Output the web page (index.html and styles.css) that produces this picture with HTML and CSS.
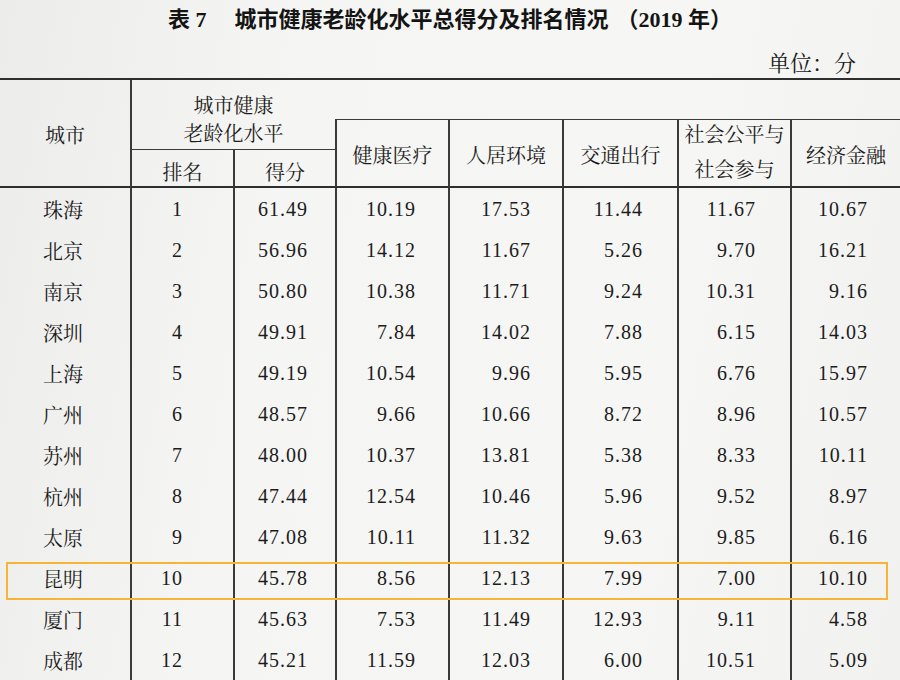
FILE: index.html
```html
<!DOCTYPE html>
<html lang="zh-CN">
<head>
<meta charset="utf-8">
<title>表7 城市健康老龄化水平总得分及排名情况</title>
<link rel="stylesheet" href="styles.css">
</head>
<body>
<div class="page">
  <h1 class="title"><span class="tno">表 7</span>城市健康老龄化水平总得分及排名情况<span class="yr">（2019 年）</span></h1>
  <div class="unit">单位：分</div>
  <div class="table">
    <div class="h-city">城市</div>
    <div class="h-total">城市健康<br>老龄化水平</div>
    <div class="h-blank"></div>
    <div class="h-dim c4">健康医疗</div>
    <div class="h-dim c5">人居环境</div>
    <div class="h-dim c6">交通出行</div>
    <div class="h-dim c7 two">社会公平与<br>社会参与</div>
    <div class="h-dim c8">经济金融</div>
    <div class="h-sub c2">排名</div>
    <div class="h-sub c3">得分</div>

    <div class="d name">珠海</div><div class="d c2">1</div><div class="d c3">61.49</div><div class="d c4">10.19</div><div class="d c5">17.53</div><div class="d c6">11.44</div><div class="d c7">11.67</div><div class="d c8">10.67</div>
    <div class="d name">北京</div><div class="d c2">2</div><div class="d c3">56.96</div><div class="d c4">14.12</div><div class="d c5">11.67</div><div class="d c6">5.26</div><div class="d c7">9.70</div><div class="d c8">16.21</div>
    <div class="d name">南京</div><div class="d c2">3</div><div class="d c3">50.80</div><div class="d c4">10.38</div><div class="d c5">11.71</div><div class="d c6">9.24</div><div class="d c7">10.31</div><div class="d c8">9.16</div>
    <div class="d name">深圳</div><div class="d c2">4</div><div class="d c3">49.91</div><div class="d c4">7.84</div><div class="d c5">14.02</div><div class="d c6">7.88</div><div class="d c7">6.15</div><div class="d c8">14.03</div>
    <div class="d name">上海</div><div class="d c2">5</div><div class="d c3">49.19</div><div class="d c4">10.54</div><div class="d c5">9.96</div><div class="d c6">5.95</div><div class="d c7">6.76</div><div class="d c8">15.97</div>
    <div class="d name">广州</div><div class="d c2">6</div><div class="d c3">48.57</div><div class="d c4">9.66</div><div class="d c5">10.66</div><div class="d c6">8.72</div><div class="d c7">8.96</div><div class="d c8">10.57</div>
    <div class="d name">苏州</div><div class="d c2">7</div><div class="d c3">48.00</div><div class="d c4">10.37</div><div class="d c5">13.81</div><div class="d c6">5.38</div><div class="d c7">8.33</div><div class="d c8">10.11</div>
    <div class="d name">杭州</div><div class="d c2">8</div><div class="d c3">47.44</div><div class="d c4">12.54</div><div class="d c5">10.46</div><div class="d c6">5.96</div><div class="d c7">9.52</div><div class="d c8">8.97</div>
    <div class="d name">太原</div><div class="d c2">9</div><div class="d c3">47.08</div><div class="d c4">10.11</div><div class="d c5">11.32</div><div class="d c6">9.63</div><div class="d c7">9.85</div><div class="d c8">6.16</div>
    <div class="d name">昆明</div><div class="d c2">10</div><div class="d c3">45.78</div><div class="d c4">8.56</div><div class="d c5">12.13</div><div class="d c6">7.99</div><div class="d c7">7.00</div><div class="d c8">10.10</div>
    <div class="d name">厦门</div><div class="d c2">11</div><div class="d c3">45.63</div><div class="d c4">7.53</div><div class="d c5">11.49</div><div class="d c6">12.93</div><div class="d c7">9.11</div><div class="d c8">4.58</div>
    <div class="d name">成都</div><div class="d c2">12</div><div class="d c3">45.21</div><div class="d c4">11.59</div><div class="d c5">12.03</div><div class="d c6">6.00</div><div class="d c7">10.51</div><div class="d c8">5.09</div>

    <div class="highlight"></div>
  </div>
</div>
</body>
</html>
```

FILE: styles.css
```css
html, body {
  margin: 0;
  padding: 0;
  width: 900px;
  height: 680px;
  overflow: hidden;
}

body {
  background: #f3f3f1;
  color: #1c1c1c;
  font-family: "Liberation Serif", "Noto Serif CJK SC", "Noto Sans CJK SC", serif;
}

.page {
  width: 900px;
  height: 680px;
  background: linear-gradient(100deg, #ecedeb 0%, #f5f5f3 30%, #f6f6f4 70%, #f1f1ef 100%);
}

.title {
  margin: 0;
  height: 40px;
  line-height: 40px;
  text-align: center;
  font-family: "Liberation Serif", "Noto Sans CJK SC", sans-serif;
  font-weight: 700;
  font-size: 22px;
  color: #141414;
}

.tno {
  margin-right: 28px;
}

.yr {
  padding-left: 8px;
}

.unit {
  height: 38px;
  line-height: 44px;
  text-align: right;
  padding-right: 44px;
  font-family: "Noto Serif CJK SC", "Noto Sans CJK SC", sans-serif;
  font-size: 22px;
}

.table {
  position: relative;
  display: grid;
  grid-template-columns: 130px 103px 102px 113px 114px 115px 113px 110px;
  grid-template-rows: 40px 30px 38px repeat(12, 41px);
  border-top: 2px solid #2e2e2e;
  font-size: 20px;
}

.table > div {
  box-sizing: border-box;
}

.h-city {
  grid-column: 1;
  grid-row: 1 / 4;
  display: flex;
  align-items: center;
  justify-content: center;
  border-bottom: 2px solid #2e2e2e;
  padding-top: 2px;
}

.h-total {
  grid-column: 2 / 4;
  grid-row: 1 / 3;
  border-left: 2px solid #3a3a3a;
  border-bottom: 1px solid #3a3a3a;
  text-align: center;
  line-height: 28px;
  padding-top: 12px;
}

.h-blank {
  grid-column: 4 / 9;
  grid-row: 1;
  border-bottom: 1px solid #3a3a3a;
}

.h-dim {
  grid-row: 2 / 4;
  border-left: 2px solid #3a3a3a;
  border-bottom: 2px solid #2e2e2e;
  display: flex;
  align-items: center;
  justify-content: center;
  text-align: center;
  padding-top: 2px;
}

.h-dim.two {
  line-height: 35px;
  padding-top: 0;
}

.h-dim.c4 { grid-column: 4; }
.h-dim.c5 { grid-column: 5; }
.h-dim.c6 { grid-column: 6; }
.h-dim.c7 { grid-column: 7; }
.h-dim.c8 { grid-column: 8; }

.h-sub {
  grid-row: 3;
  border-left: 2px solid #3a3a3a;
  border-bottom: 2px solid #2e2e2e;
  display: flex;
  align-items: center;
  justify-content: center;
  padding-top: 6px;
}

.h-sub.c2 { grid-column: 2; }
.h-sub.c3 { grid-column: 3; }

.d {
  display: flex;
  align-items: center;
  justify-content: flex-end;
  border-left: 2px solid #3a3a3a;
  letter-spacing: 1px;
  padding-top: 1px;
}

.d.name {
  border-left: none;
  justify-content: flex-start;
  padding-left: 43px;
  letter-spacing: 0;
}

.d.c2 { padding-right: 50px; }
.d.c3 { padding-right: 27px; }
.d.c4 { padding-right: 32px; }
.d.c5 { padding-right: 31px; }
.d.c6 { padding-right: 34px; }
.d.c7 { padding-right: 34px; }
.d.c8 { padding-right: 32px; }

.highlight {
  position: absolute;
  left: 6px;
  top: 482px;
  width: 882px;
  height: 38px;
  border: 2px solid #f6b535;
  pointer-events: none;
}
```
